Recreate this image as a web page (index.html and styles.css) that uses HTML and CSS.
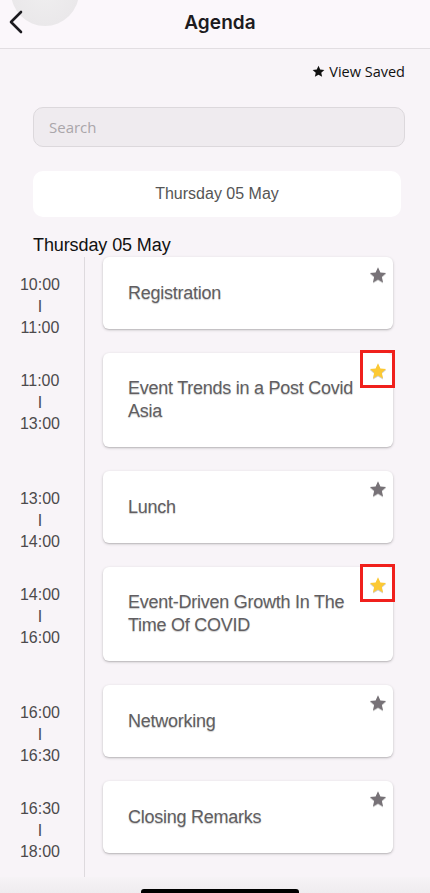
FILE: index.html
```html
<!DOCTYPE html>
<html lang="en">
<head>
<meta charset="utf-8">
<title>Agenda</title>
<link rel="stylesheet" href="styles.css">
</head>
<body>
<div class="app">
  <header class="topbar">
    <span class="ripple"></span>
    <button class="back" aria-label="Back">
      <svg width="16" height="24" viewBox="0 0 16 24"><path d="M13 2 L3 12 L13 22" fill="none" stroke="#1c1b20" stroke-width="2.6" stroke-linecap="round" stroke-linejoin="round"/></svg>
    </button>
    <h1 class="title">Agenda</h1>
  </header>

  <div class="saved-row">
    <span class="saved">
      <svg class="saved-star" width="13" height="13" viewBox="0 0 24 24"><path d="M12 1.5l3.2 7 7.6.8-5.7 5.1 1.6 7.5L12 18l-6.7 3.9 1.6-7.5L1.2 9.3l7.6-.8z" fill="#111"/></svg>
      View Saved
    </span>
  </div>

  <div class="search">Search</div>

  <div class="date-box">Thursday 05 May</div>

  <h2 class="day">Thursday 05 May</h2>

  <div class="timeline">
    <div class="row">
      <div class="time">10:00<br>I<br>11:00</div>
      <div class="card"><span class="card-title">Registration</span>
        <svg class="star" viewBox="0 0 24 24"><path d="M12 1.5l3.2 7 7.6.8-5.7 5.1 1.6 7.5L12 18l-6.7 3.9 1.6-7.5L1.2 9.3l7.6-.8z" fill="#777277"/></svg>
      </div>
    </div>
    <div class="row">
      <div class="time">11:00<br>I<br>13:00</div>
      <div class="card"><span class="card-title">Event Trends in a Post Covid Asia</span>
        <span class="mark"></span>
        <svg class="star" viewBox="0 0 24 24"><path d="M12 1.5l3.2 7 7.6.8-5.7 5.1 1.6 7.5L12 18l-6.7 3.9 1.6-7.5L1.2 9.3l7.6-.8z" fill="#fcc934"/></svg>
      </div>
    </div>
    <div class="row">
      <div class="time">13:00<br>I<br>14:00</div>
      <div class="card"><span class="card-title">Lunch</span>
        <svg class="star" viewBox="0 0 24 24"><path d="M12 1.5l3.2 7 7.6.8-5.7 5.1 1.6 7.5L12 18l-6.7 3.9 1.6-7.5L1.2 9.3l7.6-.8z" fill="#777277"/></svg>
      </div>
    </div>
    <div class="row">
      <div class="time">14:00<br>I<br>16:00</div>
      <div class="card"><span class="card-title">Event-Driven Growth In The Time Of COVID</span>
        <span class="mark"></span>
        <svg class="star" viewBox="0 0 24 24"><path d="M12 1.5l3.2 7 7.6.8-5.7 5.1 1.6 7.5L12 18l-6.7 3.9 1.6-7.5L1.2 9.3l7.6-.8z" fill="#fcc934"/></svg>
      </div>
    </div>
    <div class="row">
      <div class="time">16:00<br>I<br>16:30</div>
      <div class="card"><span class="card-title">Networking</span>
        <svg class="star" viewBox="0 0 24 24"><path d="M12 1.5l3.2 7 7.6.8-5.7 5.1 1.6 7.5L12 18l-6.7 3.9 1.6-7.5L1.2 9.3l7.6-.8z" fill="#777277"/></svg>
      </div>
    </div>
    <div class="row">
      <div class="time">16:30<br>I<br>18:00</div>
      <div class="card"><span class="card-title">Closing Remarks</span>
        <svg class="star" viewBox="0 0 24 24"><path d="M12 1.5l3.2 7 7.6.8-5.7 5.1 1.6 7.5L12 18l-6.7 3.9 1.6-7.5L1.2 9.3l7.6-.8z" fill="#777277"/></svg>
      </div>
    </div>
  </div>

  <footer class="home-area"><span class="home-bar"></span></footer>
</div>
</body>
</html>
```

FILE: styles.css
```css
* { box-sizing: border-box; }
html, body { margin: 0; padding: 0; }
body {
  background: #f8f4f8;
  font-family: "Liberation Sans", Arial, sans-serif;
  width: 430px;
  height: 893px;
  overflow: hidden;
}
.app { display: flex; flex-direction: column; height: 893px; }
.app > * { flex: none; }

.topbar {
  position: relative;
  height: 49px;
  background: #fbf7fb;
  border-bottom: 1px solid #e2dee2;
  display: flex;
  align-items: center;
  justify-content: center;
  overflow: hidden;
}
.ripple {
  position: absolute;
  left: 11px;
  top: -42px;
  width: 68px;
  height: 68px;
  border-radius: 50%;
  background: radial-gradient(circle, #efeeef 0%, #eae8ea 70%);
}
.back {
  position: absolute;
  left: 7px;
  top: 10px;
  border: 0;
  background: none;
  padding: 0;
  width: 18px;
  height: 24px;
}
.title {
  margin: -4px 0 0 10px;
  font-family: Inter, "Open Sans", sans-serif;
  font-weight: 600;
  font-size: 19px;
  color: #1c1b20;
  letter-spacing: 0.1px;
}

.saved-row {
  display: flex;
  justify-content: flex-end;
  padding: 13px 25px 0 0;
  height: 33px;
}
.saved {
  display: flex;
  align-items: center;
  gap: 4px;
  font-family: "Open Sans", sans-serif;
  font-size: 14.5px;
  line-height: 20px;
  color: #111;
}
.saved-star { margin-top: -1px; }

.search {
  margin: 25px 25px 0 33px;
  height: 40px;
  border: 1px solid #dcd8dc;
  border-radius: 10px;
  background: #efebef;
  padding-left: 15px;
  display: flex;
  align-items: center;
  font-family: "Open Sans", sans-serif;
  font-size: 15px;
  color: #aaa6aa;
}

.date-box {
  margin: 24px 29px 0 33px;
  height: 46px;
  border-radius: 10px;
  background: #fff;
  display: flex;
  align-items: center;
  justify-content: center;
  font-size: 16px;
  color: #555;
}

.day {
  margin: 17px 0 0 33px;
  font-size: 18px;
  line-height: 22px;
  font-weight: normal;
  color: #111;
  letter-spacing: -0.1px;
}

.timeline {
  margin-top: 1px;
  display: flex;
  flex-direction: column;
}
.row { display: flex; }
.time {
  width: 85px;
  flex: none;
  border-right: 1px solid #dedade;
  padding: 17px 4px 0 0;
  text-align: center;
  font-size: 16px;
  line-height: 21.5px;
  color: #4c4a4c;
}
.card {
  position: relative;
  margin: 0 0 24px 18px;
  width: 290px;
  min-height: 72px;
  padding: 24px 22px 24px 25px;
  background: #fff;
  border-radius: 6px;
  box-shadow: 0 1px 3px rgba(0,0,0,0.22), 0 1px 1px rgba(0,0,0,0.08);
  display: flex;
  align-items: center;
  align-self: flex-start;
}
.card-title {
  font-size: 18px;
  line-height: 23px;
  color: #615e61;
  letter-spacing: -0.25px;
  text-shadow: 0 1px 1px rgba(0,0,0,0.2);
}
.star {
  position: absolute;
  top: 9px;
  right: 6px;
  width: 18px;
  height: 18px;
  filter: drop-shadow(0 1px 0.5px rgba(0,0,0,0.2));
}
.mark {
  position: absolute;
  top: -3px;
  right: -2px;
  width: 35px;
  height: 38px;
  border: 3px solid #f0201c;
}

.home-area {
  flex: 1;
  position: relative;
  background: linear-gradient(#f6f3f6, #efecef);
  display: flex;
  justify-content: center;
  align-items: flex-end;
}
.home-bar {
  width: 158px;
  height: 5px;
  margin: 0 0 -1px 10px;
  background: #000;
  border-radius: 3px 3px 0 0;
}
```
